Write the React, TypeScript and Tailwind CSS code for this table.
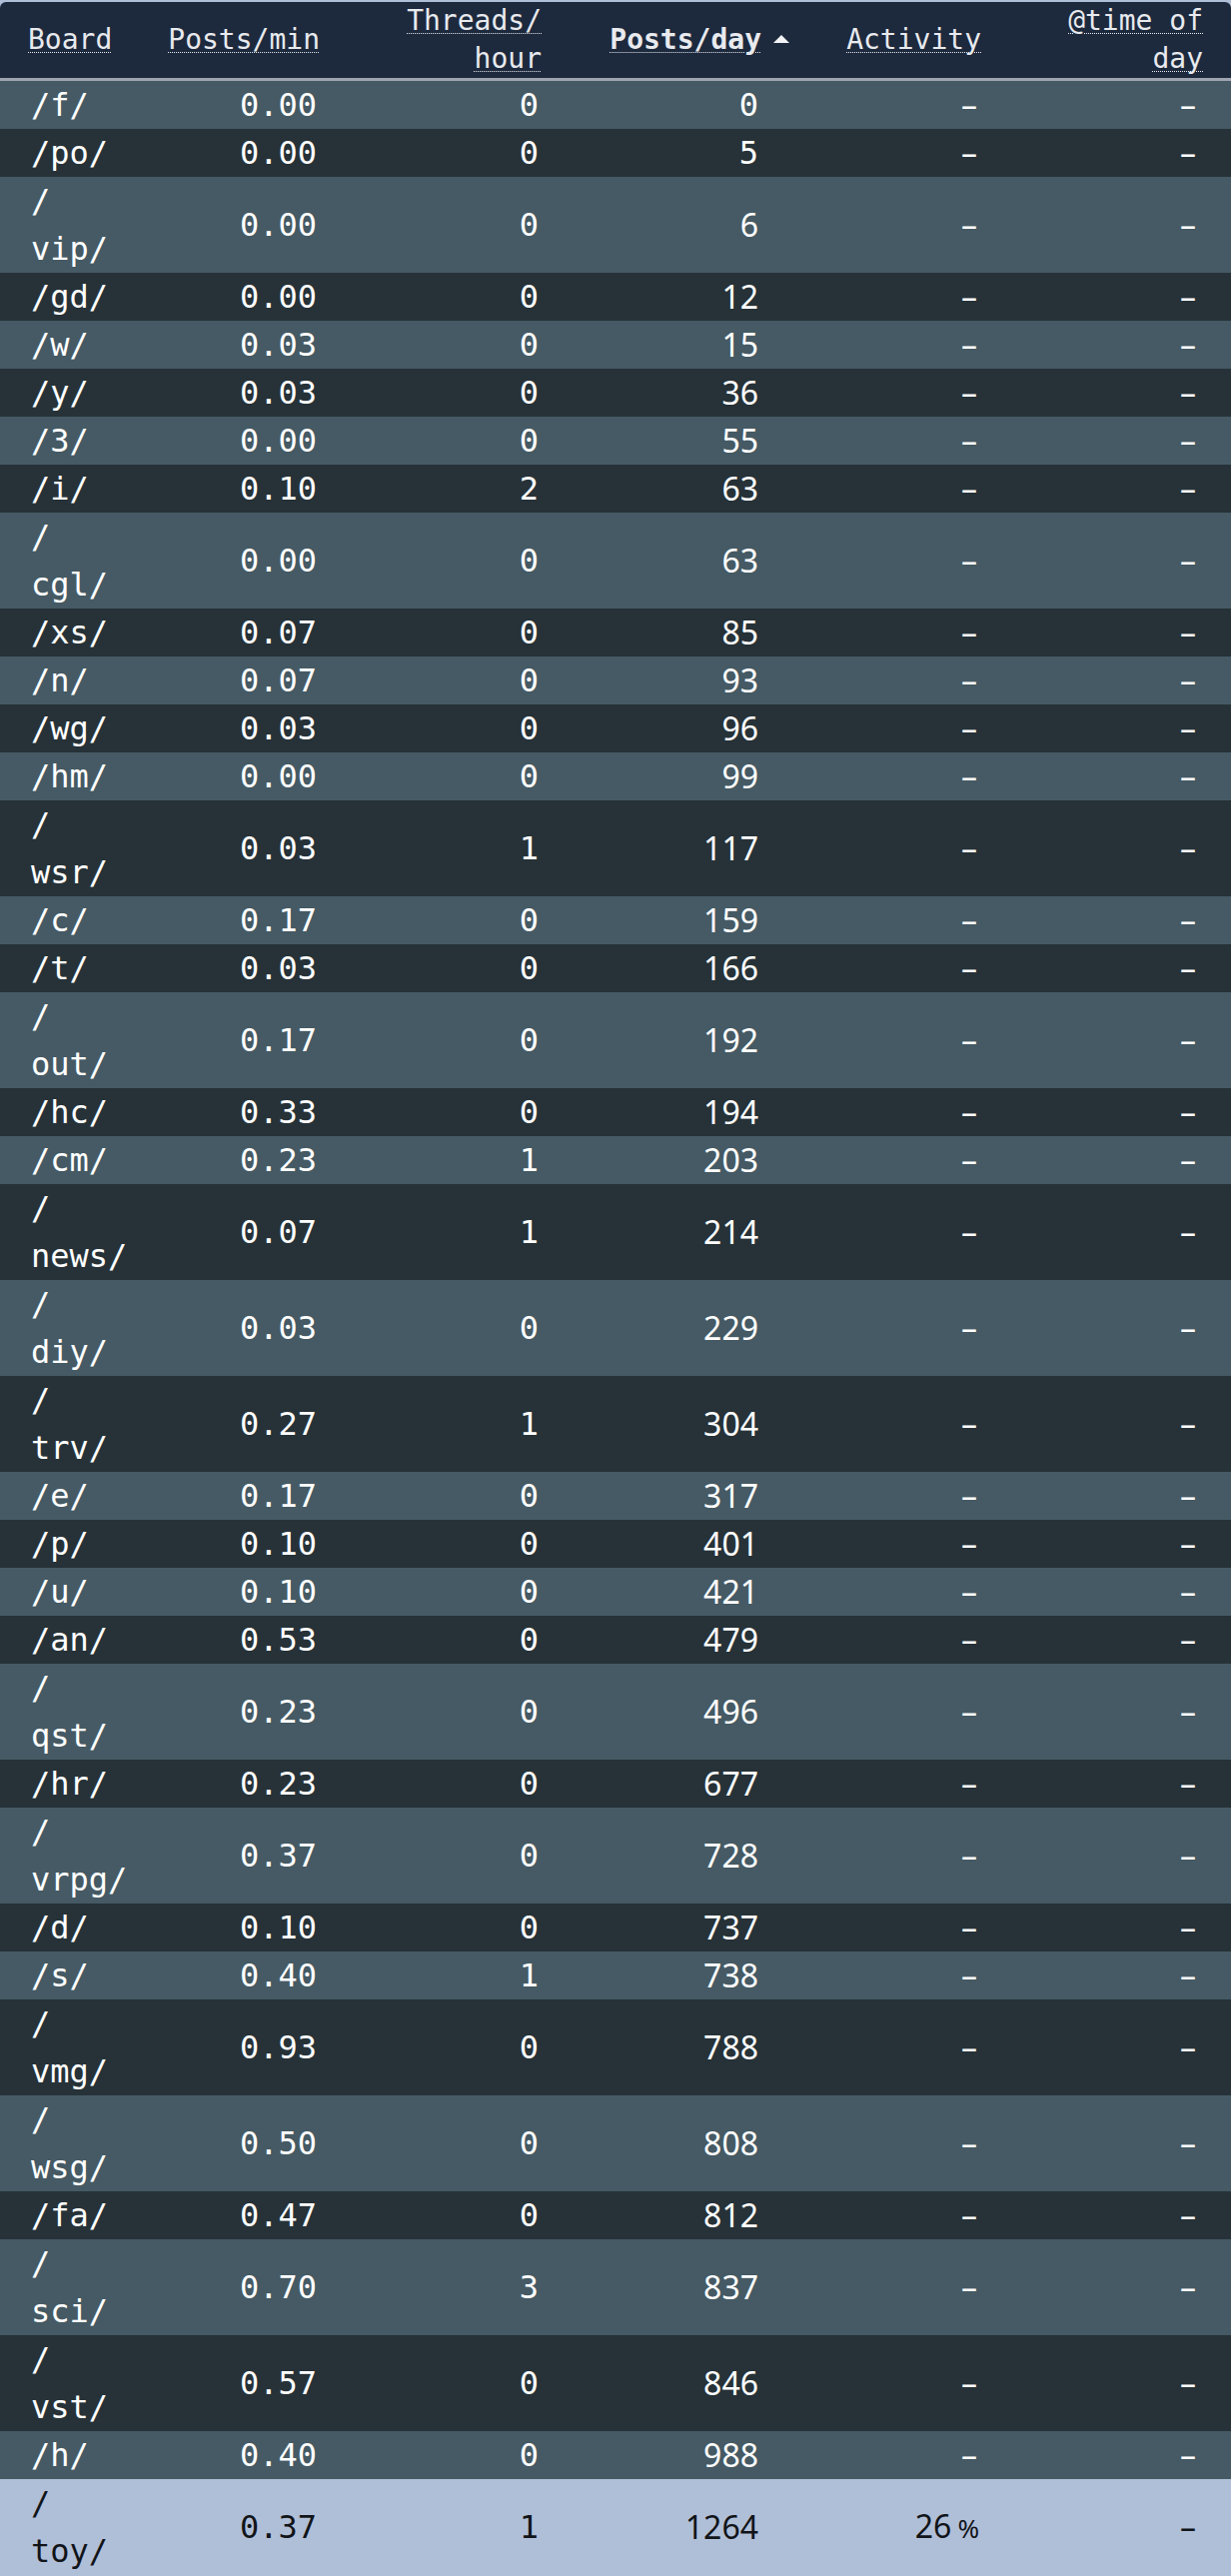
import React from 'react';

type Row = {
  board: string;
  perMin: string;
  threads: number;
  perDay: number;
};

const rows: Row[] = [
  { board: '/f/', perMin: '0.00', threads: 0, perDay: 0 },
  { board: '/po/', perMin: '0.00', threads: 0, perDay: 5 },
  { board: '/vip/', perMin: '0.00', threads: 0, perDay: 6 },
  { board: '/gd/', perMin: '0.00', threads: 0, perDay: 12 },
  { board: '/w/', perMin: '0.03', threads: 0, perDay: 15 },
  { board: '/y/', perMin: '0.03', threads: 0, perDay: 36 },
  { board: '/3/', perMin: '0.00', threads: 0, perDay: 55 },
  { board: '/i/', perMin: '0.10', threads: 2, perDay: 63 },
  { board: '/cgl/', perMin: '0.00', threads: 0, perDay: 63 },
  { board: '/xs/', perMin: '0.07', threads: 0, perDay: 85 },
  { board: '/n/', perMin: '0.07', threads: 0, perDay: 93 },
  { board: '/wg/', perMin: '0.03', threads: 0, perDay: 96 },
  { board: '/hm/', perMin: '0.00', threads: 0, perDay: 99 },
  { board: '/wsr/', perMin: '0.03', threads: 1, perDay: 117 },
  { board: '/c/', perMin: '0.17', threads: 0, perDay: 159 },
  { board: '/t/', perMin: '0.03', threads: 0, perDay: 166 },
  { board: '/out/', perMin: '0.17', threads: 0, perDay: 192 },
  { board: '/hc/', perMin: '0.33', threads: 0, perDay: 194 },
  { board: '/cm/', perMin: '0.23', threads: 1, perDay: 203 },
  { board: '/news/', perMin: '0.07', threads: 1, perDay: 214 },
  { board: '/diy/', perMin: '0.03', threads: 0, perDay: 229 },
  { board: '/trv/', perMin: '0.27', threads: 1, perDay: 304 },
  { board: '/e/', perMin: '0.17', threads: 0, perDay: 317 },
  { board: '/p/', perMin: '0.10', threads: 0, perDay: 401 },
  { board: '/u/', perMin: '0.10', threads: 0, perDay: 421 },
  { board: '/an/', perMin: '0.53', threads: 0, perDay: 479 },
  { board: '/qst/', perMin: '0.23', threads: 0, perDay: 496 },
  { board: '/hr/', perMin: '0.23', threads: 0, perDay: 677 },
  { board: '/vrpg/', perMin: '0.37', threads: 0, perDay: 728 },
  { board: '/d/', perMin: '0.10', threads: 0, perDay: 737 },
  { board: '/s/', perMin: '0.40', threads: 1, perDay: 738 },
  { board: '/vmg/', perMin: '0.93', threads: 0, perDay: 788 },
  { board: '/wsg/', perMin: '0.50', threads: 0, perDay: 808 },
  { board: '/fa/', perMin: '0.47', threads: 0, perDay: 812 },
  { board: '/sci/', perMin: '0.70', threads: 3, perDay: 837 },
  { board: '/vst/', perMin: '0.57', threads: 0, perDay: 846 },
  { board: '/h/', perMin: '0.40', threads: 0, perDay: 988 },
];

const mono = "font-['DejaVu_Sans_Mono',monospace]";
const sans = "font-['Noto_Sans',sans-serif]";
const abbr = 'underline decoration-dotted decoration-1 underline-offset-[3px]';

const BoardName: React.FC<{ name: string }> = ({ name }) =>
  name.length > 4 ? (
    <>
      /<br />
      {name.slice(1)}
    </>
  ) : (
    <>{name}</>
  );

const App: React.FC = () => {
  return (
    <div className="w-full min-h-screen bg-[#b0bfd8] pt-[2px]">
      <div className="rounded-t-[6px] overflow-hidden">
        <table className={`w-full table-fixed border-separate border-spacing-0 ${mono}`}>
          <colgroup>
            <col className="w-[150px]" />
            <col className="w-[200px]" />
            <col className="w-[222px]" />
            <col className="w-[220px]" />
            <col className="w-[220px]" />
            <col className="w-[220px]" />
          </colgroup>
          <thead>
            <tr className="bg-slate-800 text-[#e8eaee] text-[28px] leading-[38px] align-middle">
              <th className="h-[76px] pl-[28px] pr-0 text-left font-normal border-b-[3px] border-[#9ea4b0]">
                <span className={abbr}>Board</span>
              </th>
              <th className="pr-[30px] text-right font-normal border-b-[3px] border-[#9ea4b0] whitespace-nowrap">
                <span className={abbr}>Posts/min</span>
              </th>
              <th className="pr-[30px] text-right font-normal border-b-[3px] border-[#9ea4b0]">
                <span className={abbr}>Threads/</span>
                <br />
                <span className={abbr}>hour</span>
              </th>
              <th className="pr-[2px] text-right font-bold border-b-[3px] border-[#9ea4b0] whitespace-nowrap">
                <span className={abbr}>Posts/day</span>
                <svg className="inline-block ml-[12px] mb-[4px]" width="16" height="8" viewBox="0 0 16 8">
                  <path d="M8 0 L16 8 L0 8 Z" fill="#f1f3f6" />
                </svg>
              </th>
              <th className="pr-[30px] text-right font-normal border-b-[3px] border-[#9ea4b0]">
                <span className={abbr}>Activity</span>
              </th>
              <th className="pr-[28px] text-right font-normal border-b-[3px] border-[#9ea4b0]">
                <span className={abbr}>@time of</span>
                <br />
                <span className={abbr}>day</span>
              </th>
            </tr>
          </thead>
          <tbody className="text-[32px] leading-[48px]">
            {rows.map((r, i) => (
              <tr key={r.board} className={`${i % 2 === 0 ? 'bg-[#455a64]' : 'bg-[#263238]'} text-white align-middle`}>
                <td className="pl-[31px] pr-0 text-left">
                  <BoardName name={r.board} />
                </td>
                <td className="pr-[33px] text-right">{r.perMin}</td>
                <td className="pr-[33px] text-right">{r.threads}</td>
                <td className={`pr-[33px] text-right ${r.perDay < 6 ? mono : sans}`}>{r.perDay}</td>
                <td className={`pr-[34px] text-right ${sans}`}>–</td>
                <td className={`pr-[35px] text-right ${sans}`}>–</td>
              </tr>
            ))}
            <tr className="bg-[#b0bfd8] text-[#111418] align-middle">
              <td className="pl-[31px] pr-0 text-left">
                <BoardName name="/toy/" />
              </td>
              <td className="pr-[33px] text-right">0.37</td>
              <td className="pr-[33px] text-right">1</td>
              <td className={`pr-[33px] text-right ${sans}`}>1264</td>
              <td className={`pr-[32px] text-right whitespace-nowrap ${sans}`}>
                26<span className="ml-[6px] text-[26px]">%</span>
              </td>
              <td className={`pr-[35px] text-right ${sans}`}>–</td>
            </tr>
          </tbody>
        </table>
      </div>
    </div>
  );
};

export default App;
